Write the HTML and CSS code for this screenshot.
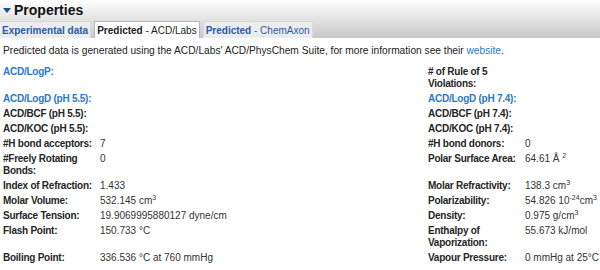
FILE: index.html
```html
<!DOCTYPE html>
<html lang="en">

<head>
    <meta charset="UTF-8">
    <meta name="viewport" content="width=device-width, initial-scale=1.0">
    <title>Properties</title>
    <link rel="stylesheet" href="styles.css">
</head>

<body>

    <div class="section-head">
        <h2><span class="arrow"></span>Properties</h2>
        <div class="tabs">
            <a class="tab">Experimental data</a>
            <a class="tab active"><b>Predicted</b> - ACD/Labs</a>
            <a class="tab"><b>Predicted</b> - ChemAxon</a>
        </div>
    </div>

    <div class="tab-body">
        <p class="note">Predicted data is generated using the ACD/Labs' ACD/PhysChem Suite, for more information see their <a href="#">website</a>.</p>

        <div class="props">
            <div class="label link">ACD/LogP:</div>
            <div class="value"></div>
            <div class="label">#&nbsp;of Rule of 5 Violations:</div>
            <div class="value"></div>

            <div class="label link">ACD/LogD (pH 5.5):</div>
            <div class="value"></div>
            <div class="label link">ACD/LogD (pH 7.4):</div>
            <div class="value"></div>

            <div class="label">ACD/BCF (pH 5.5):</div>
            <div class="value"></div>
            <div class="label">ACD/BCF (pH 7.4):</div>
            <div class="value"></div>

            <div class="label">ACD/KOC (pH 5.5):</div>
            <div class="value"></div>
            <div class="label">ACD/KOC (pH 7.4):</div>
            <div class="value"></div>

            <div class="label">#H bond acceptors:</div>
            <div class="value">7</div>
            <div class="label">#H bond donors:</div>
            <div class="value">0</div>

            <div class="label">#Freely Rotating Bonds:</div>
            <div class="value">0</div>
            <div class="label">Polar Surface Area:</div>
            <div class="value">64.61 &Aring; <sup>2</sup></div>

            <div class="label">Index of Refraction:</div>
            <div class="value">1.433</div>
            <div class="label">Molar Refractivity:</div>
            <div class="value">138.3 cm<sup>3</sup></div>

            <div class="label">Molar Volume:</div>
            <div class="value">532.145 cm<sup>3</sup></div>
            <div class="label">Polarizability:</div>
            <div class="value">54.826 10<sup>-24</sup>cm<sup>3</sup></div>

            <div class="label">Surface Tension:</div>
            <div class="value">19.9069995880127 dyne/cm</div>
            <div class="label">Density:</div>
            <div class="value">0.975 g/cm<sup>3</sup></div>

            <div class="label">Flash Point:</div>
            <div class="value">150.733 &deg;C</div>
            <div class="label">Enthalpy of Vaporization:</div>
            <div class="value">55.673 kJ/mol</div>

            <div class="label">Boiling Point:</div>
            <div class="value">336.536 &deg;C at 760 mmHg</div>
            <div class="label">Vapour Pressure:</div>
            <div class="value">0 mmHg at 25&deg;C</div>
        </div>
    </div>

</body>

</html>
```

FILE: styles.css
```css
body {
    margin: 0;
    font-family: 'Liberation Sans', Arial, sans-serif;
    font-size: 10px;
    color: #222;
    background: #fff;
}

.section-head {
    height: 38px;
    background: linear-gradient(#fff, #c8c8c8);
    display: flex;
    flex-direction: column;
    justify-content: space-between;
}

.section-head h2 {
    margin: 0;
    padding: 2px 0 0 3px;
    font-size: 14px;
    line-height: 16px;
    color: #111;
    display: flex;
    align-items: center;
}

.arrow {
    width: 0;
    height: 0;
    border-left: 4px solid transparent;
    border-right: 4px solid transparent;
    border-top: 5px solid #1c4f8a;
    margin-right: 3px;
}

.tabs {
    display: flex;
    gap: 3px;
}

.tab {
    height: 17px;
    line-height: 17px;
    padding: 0 2px;
    box-sizing: border-box;
    background: #ececec;
    border: 1px solid #d8d8d8;
    border-bottom: none;
    color: #2a5d9f;
    font-weight: bold;
}

.tab:first-child {
    border-left: none;
}

.tab b {
    font-weight: bold;
}

.tab:nth-child(3) {
    font-weight: normal;
}

.tab.active {
    background: #fff;
    border-color: #b5b5b5;
    color: #222;
    font-weight: normal;
}

.tab-body {
    padding: 0 3px;
}

.note {
    margin: 0;
    padding: 7px 0 8px;
    font-size: 10.2px;
    line-height: 12px;
}

.note a {
    color: #2f77c7;
    text-decoration: none;
}

.props {
    display: grid;
    grid-template-columns: 97px 328px 97px 1fr;
    line-height: 12px;
}

.props > div {
    padding: 1px 0 2px;
}

.label {
    font-weight: bold;
    letter-spacing: -0.25px;
    color: #262626;
}

.label.link {
    color: #2f77c7;
}

.value {
    color: #333;
    white-space: nowrap;
}

.value sup {
    font-size: 7px;
    line-height: 0;
    vertical-align: 4px;
}
```
